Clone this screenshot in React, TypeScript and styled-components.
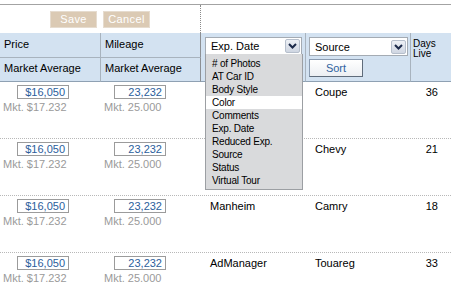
import React from 'react'
import styled, { createGlobalStyle } from 'styled-components'

type Car = {
  price: string
  mkPrice: string
  miles: string
  mkMiles: string
  source: string
  model: string
  days: number
}

const cars: Car[] = [
  { price: '$16,050', mkPrice: 'Mkt. $17.232', miles: '23,232', mkMiles: 'Mkt. 25.000', source: '', model: 'Coupe', days: 36 },
  { price: '$16,050', mkPrice: 'Mkt. $17.232', miles: '23,232', mkMiles: 'Mkt. 25.000', source: '', model: 'Chevy', days: 21 },
  { price: '$16,050', mkPrice: 'Mkt. $17.232', miles: '23,232', mkMiles: 'Mkt. 25.000', source: 'Manheim', model: 'Camry', days: 18 },
  { price: '$16,050', mkPrice: 'Mkt. $17.232', miles: '23,232', mkMiles: 'Mkt. 25.000', source: 'AdManager', model: 'Touareg', days: 33 },
]

const options = ['# of Photos', 'AT Car ID', 'Body Style', 'Color', 'Comments', 'Exp. Date', 'Reduced Exp.', 'Source', 'Status', 'Virtual Tour']

const Arrow = () => (
  <ArrowBtn>
    <svg width="9" height="6" viewBox="0 0 9 6">
      <path d="M1 1 L4.5 4.5 L8 1" fill="none" stroke="#1c2a4a" strokeWidth="2" />
    </svg>
  </ArrowBtn>
)

const App: React.FC = () => {
  return (
    <Page>
      <GlobalStyle />
      <Toolbar>
        <ButtonArea>
          <TanButton>Save</TanButton>
          <TanButton>Cancel</TanButton>
        </ButtonArea>
        <div />
      </Toolbar>
      <Header>
        <HeadCell>Price</HeadCell>
        <HeadCell $strong>Mileage</HeadCell>
        <SpanCell>
          <Select $width={97}>
            <span>Exp. Date</span>
            <Arrow />
            <List>
              {options.map((o) => (
                <Item key={o} $active={o === 'Color'}>{o}</Item>
              ))}
            </List>
          </Select>
        </SpanCell>
        <SpanCell $pad={3}>
          <Select $width={99} $height={19}>
            <span>Source</span>
            <Arrow />
          </Select>
          <SortButton>Sort</SortButton>
        </SpanCell>
        <DaysCell>Days<br />Live</DaysCell>
        <HeadCell $row2>Market Average</HeadCell>
        <HeadCell $row2 $strong>Market Average</HeadCell>
      </Header>
      {cars.map((c, i) => (
        <Row key={i}>
          <Cell>
            <ValueBox $indent={17}>{c.price}</ValueBox>
            <Market>{c.mkPrice}</Market>
          </Cell>
          <Cell>
            <ValueBox $indent={13}>{c.miles}</ValueBox>
            <Market>{c.mkMiles}</Market>
          </Cell>
          <TextCell>{c.source}</TextCell>
          <TextCell>{c.model}</TextCell>
          <DaysValue>{c.days}</DaysValue>
        </Row>
      ))}
    </Page>
  )
}

export default App

const GlobalStyle = createGlobalStyle`
body {
  margin: 0;
  background: #fff;
  font-family: "Liberation Sans", Arial, sans-serif;
  font-size: 11px;
  color: #000;
}
`

const Page = styled.div`
width: 451px;
height: 293px;
box-sizing: border-box;
padding-top: 4px;
overflow: hidden;
`

const Toolbar = styled.div`
display: grid;
grid-template-columns: 201px 1fr;
height: 28px;
border-top: 1px solid #a3a3a3;
`

const ButtonArea = styled.div`
display: flex;
align-items: center;
justify-content: center;
gap: 6px;
border-right: 1px dotted #8a8a8a;
`

const TanButton = styled.button`
width: 47px;
height: 17px;
padding: 0;
background: #dbcab4;
border: 1px solid #e6dccf;
color: #fff;
font-family: "Liberation Sans", Arial, sans-serif;
font-size: 11px;
letter-spacing: 0.4px;
`

const Header = styled.div`
display: grid;
grid-template-columns: 101px 100px 105px 105px 40px;
grid-template-rows: 25px 24px;
background: #d3e2f1;
position: relative;
z-index: 2;
`

const HeadCell = styled.div<{ $row2?: boolean; $strong?: boolean }>`
padding: ${(p) => (p.$row2 ? '5px' : '6px')} 4px 0;
line-height: 11px;
border-bottom: 1px solid ${(p) => (p.$row2 ? '#8fa1b3' : '#a8b3be')};
border-right: 1px solid ${(p) => (p.$strong ? '#8c8f93' : '#a8b3be')};
color: #000;
`

const SpanCell = styled.div<{ $pad?: number }>`
grid-row: span 2;
padding: 4px 0 0 ${(p) => p.$pad ?? 4}px;
border-right: 1px solid #a8b3be;
border-bottom: 1px solid #8fa1b3;
`

const DaysCell = styled.div`
grid-row: span 2;
padding: 6px 2px 0;
font-size: 10px;
line-height: 10px;
border-bottom: 1px solid #8fa1b3;
`

const Select = styled.div<{ $width: number; $height?: number }>`
position: relative;
display: flex;
align-items: center;
justify-content: space-between;
box-sizing: border-box;
width: ${(p) => p.$width}px;
height: ${(p) => p.$height ?? 18}px;
padding: 0 1px 0 5px;
background: #fff;
border: 1px solid #a4abb3;
font-size: 11px;
`

const ArrowBtn = styled.div`
display: flex;
align-items: center;
justify-content: center;
width: 15px;
height: 14px;
box-sizing: border-box;
border: 1px solid #b6bfcc;
border-radius: 2px;
background: linear-gradient(#eef1f6, #cfd6e2);
`

const List = styled.div`
position: absolute;
top: 100%;
left: -1px;
width: 98px;
box-sizing: border-box;
padding: 3px 0 2px;
background: #d9dadc;
border: 1px solid #9c9fa3;
border-top: none;
`

const Item = styled.div<{ $active?: boolean }>`
height: 13px;
line-height: 13px;
padding-left: 6px;
font-size: 10px;
letter-spacing: -0.2px;
background: ${(p) => (p.$active ? '#fff' : 'transparent')};
`

const SortButton = styled.button`
display: block;
margin-top: 3px;
width: 54px;
height: 18px;
padding: 0;
background: linear-gradient(#ffffff, #eceff3);
border: 1px solid #8a9bb0;
border-right-color: #5f6c7b;
border-bottom-color: #5f6c7b;
color: #2f63a0;
font-family: "Liberation Sans", Arial, sans-serif;
font-size: 11px;
`

const Row = styled.div`
display: grid;
grid-template-columns: 101px 100px 105px 105px 40px;
height: 57px;
box-sizing: border-box;
border-bottom: 1px dotted #b8b8b8;
`

const Cell = styled.div`
padding: 3px 0 0 3px;
`

const ValueBox = styled.div<{ $indent: number }>`
box-sizing: border-box;
width: 52px;
height: 14px;
margin-left: ${(p) => p.$indent - 3}px;
padding-right: 3px;
border: 1px solid #9b9b9b;
line-height: 12px;
text-align: right;
color: #2b5e9c;
`

const Market = styled.div`
margin-top: 2px;
line-height: 13px;
color: #9a9a9a;
`

const TextCell = styled.div`
padding: 3px 0 0 9px;
line-height: 14px;
`

const DaysValue = styled.div`
padding: 3px 13px 0 0;
line-height: 14px;
text-align: right;
`
